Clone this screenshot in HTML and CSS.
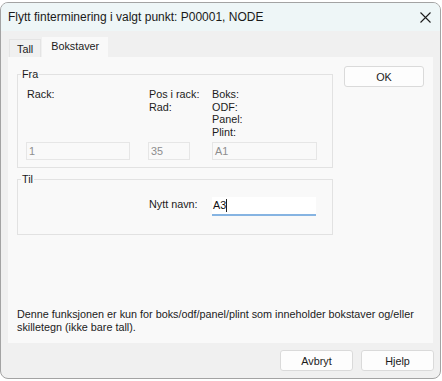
FILE: index.html
```html
<!DOCTYPE html>
<html lang="no">
<head>
<meta charset="utf-8">
<title>Flytt finterminering</title>
<link rel="stylesheet" href="styles.css">
</head>
<body>
<div class="window">
  <div class="titlebar">
    <span class="title">Flytt finterminering i valgt punkt: P00001, NODE</span>
    <svg class="close" width="11" height="11" viewBox="0 0 11 11" aria-hidden="true">
      <path d="M0.5 0.5 L10.5 10.5 M10.5 0.5 L0.5 10.5" stroke="#1c1c1c" stroke-width="1.1" fill="none"/>
    </svg>
  </div>
  <div class="client">
    <div class="tabs">
      <div class="tab">Tall</div>
      <div class="tab active">Bokstaver</div>
    </div>
    <div class="page">
      <div class="page-top">
        <div class="groups">
          <fieldset class="group fra">
            <legend>Fra</legend>
            <div class="grid">
              <div class="lbl">Rack:</div>
              <div class="lbl">Pos i rack:<br>Rad:</div>
              <div class="lbl c3">Boks:<br>ODF:<br>Panel:<br>Plint:</div>
              <div class="field w1">1</div>
              <div class="field w2">35</div>
              <div class="field w3">A1</div>
            </div>
          </fieldset>
          <fieldset class="group til">
            <legend>Til</legend>
            <div class="grid">
              <div class="lbl nytt">Nytt navn:</div>
              <div class="edit">A3<span class="caret"></span></div>
            </div>
          </fieldset>
        </div>
        <button class="btn ok">OK</button>
      </div>
      <p class="note">Denne funksjonen er kun for boks/odf/panel/plint som inneholder bokstaver og/eller skilletegn (ikke bare tall).</p>
    </div>
    <div class="footer">
      <button class="btn">Avbryt</button>
      <button class="btn">Hjelp</button>
    </div>
  </div>
</div>
</body>
</html>
```

FILE: styles.css
```css
html, body {
  margin: 0;
  padding: 0;
  background: #ffffff;
}

body {
  font-family: "Liberation Sans", Arial, sans-serif;
  font-size: 10.8px;
  color: #1b1b1b;
}

.window {
  box-sizing: border-box;
  margin-top: 2px;
  width: 441px;
  height: 377px;
  border: 1px solid #a3a3a3;
  border-radius: 8px;
  overflow: hidden;
  background: #f0f0f0;
  display: flex;
  flex-direction: column;
}

.titlebar {
  height: 28px;
  flex: none;
  display: flex;
  align-items: center;
  padding-left: 7px;
  padding-right: 9px;
  background: #eef6f7;
}

.title {
  font-size: 12px;
  color: #1a1a1a;
}

.close {
  margin-left: auto;
  display: block;
}

.client {
  flex: 1;
  display: flex;
  flex-direction: column;
  padding: 6px 6px 7px 7px;
  min-height: 0;
}

.tabs {
  display: flex;
  align-items: flex-end;
  height: 20px;
  padding-left: 1px;
  margin-right: 1px;
}

.tab {
  box-sizing: border-box;
  height: 18px;
  padding: 3px 7px 0 7px;
  line-height: 13px;
  border: 1px solid #e4e4e4;
  border-bottom: none;
  background: #f0f0f0;
  margin-right: 1px;
}

.tab.active {
  height: 20px;
  padding: 2px 8px 0 8px;
  background: #f9f9f9;
  border-color: #f9f9f9;
}

.page {
  flex: 1;
  display: flex;
  flex-direction: column;
  background: #f9f9f9;
  padding: 9px;
  margin-right: 1px;
  min-height: 0;
}

.page-top {
  display: flex;
  align-items: flex-start;
  gap: 11px;
}

.groups {
  width: 316px;
  display: flex;
  flex-direction: column;
  gap: 5px;
}

.group {
  margin: 0;
  min-inline-size: 0;
  border: 1px solid #e2e2e2;
  padding: 7px 0 7px 3px;
}

.group legend {
  padding: 0 1px;
  line-height: 13px;
}

.fra {
  margin-top: 2px;
}

.til {
  padding-top: 11px;
  padding-bottom: 18px;
}

.grid {
  display: grid;
  grid-template-columns: 122px 64px 105px;
  padding-left: 5px;
}

.lbl {
  line-height: 12.5px;
  padding-left: 1px;
}

.lbl.c3 {
  padding-left: 0;
}

.nytt {
  grid-column: 2;
  padding-top: 1px;
}

.field {
  box-sizing: border-box;
  margin-top: 4px;
  height: 18px;
  border: 1px solid #e6e6e6;
  background: #f9f9f9;
  color: #8d8d8d;
  padding-left: 2px;
  line-height: 16px;
}

.w1 { width: 104px; }
.w2 { width: 42px; }
.w3 { width: 105px; }

.edit {
  box-sizing: border-box;
  grid-column: 3;
  width: 104px;
  height: 19px;
  background: #ffffff;
  border-bottom: 2px solid #86b4e2;
  padding-left: 1px;
  line-height: 17px;
  color: #111111;
}

.caret {
  display: inline-block;
  width: 0;
  height: 13px;
  border-left: 1px solid #222222;
  vertical-align: -3px;
}

.btn {
  box-sizing: border-box;
  font-family: "Liberation Sans", Arial, sans-serif;
  font-size: 10.8px;
  color: #1b1b1b;
  background: #fdfdfd;
  border: 1px solid #dadada;
  border-radius: 3px;
  height: 21px;
  padding: 0;
  margin: 0;
}

.ok {
  width: 80px;
}

.note {
  margin: auto 0 0 0;
  line-height: 13px;
}

.footer {
  display: flex;
  justify-content: flex-end;
  gap: 8px;
  margin-top: 7px;
}

.footer .btn {
  width: 73px;
}
```
